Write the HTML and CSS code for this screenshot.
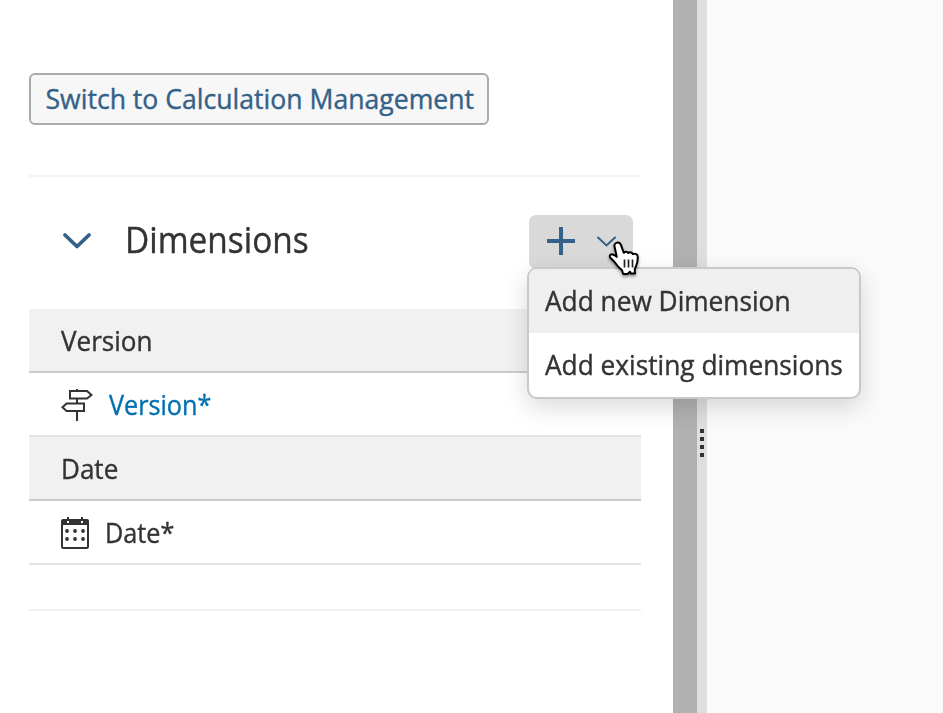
FILE: index.html
```html
<!DOCTYPE html>
<html lang="en">
<head>
<meta charset="utf-8">
<title>Dimensions</title>
<link rel="stylesheet" href="styles.css">
</head>
<body>
<main class="panel">
  <button class="switch"><span class="label switch-label">Switch to Calculation Management</span></button>
  <section class="dimensions">
    <header class="head">
      <svg class="collapse" width="32" height="32" viewBox="0 0 32 32"><path d="M4 11l12 11.500L28 11"/></svg>
      <h1><span class="label title-label">Dimensions</span></h1>
      <div class="add">
        <svg width="104" height="54" viewBox="0 0 104 54"><path class="plus" d="M18 26H46M32 12V40"/><path class="arrow" d="M69 22.500l8.500 8L86 22.500"/></svg>
        <div class="menu">
          <div class="item selected"><span class="label new-label">Add new Dimension</span></div>
          <div class="item"><span class="label existing-label">Add existing dimensions</span></div>
        </div>
        <svg class="cursor" width="36" height="38" viewBox="0 0 36 38">
          <path class="hand" d="M8 3c2-1.200 4.200-.2 4.900 1.800l2.900 8c1.500-1.600 3.600-1.500 4.500.2 1.800-1.200 3.800-.6 4.500 1.100 2.400-1 5 .3 5 3 0 3.600-.2 6-1.800 9.200l-1.300 2.700.3 4.500h-4.200l-.8-1.800-2.300 2.300h-4.500l-1.200-3.800c-2.600-2.200-4.900-4.400-6.700-7.200-1-1.500-2.600-3-4.500-4.700-2.200-2-.7-4.500 2-3.800 1.500.3 2.800 1.200 4 2.400L6.700 7.300C6 5.300 6.400 3.900 8 3z"/>
          <path class="fingers" d="M16.500 19.500v8M20.500 19.500v8M24.500 19.500v8"/>
        </svg>
      </div>
    </header>
    <div class="group"><span class="label short-label">Version</span></div>
    <div class="entry">
      <svg class="sign" width="32" height="32" viewBox="0 0 32 32"><path d="M9 2H26l4.500 4L26 9.500H9zM5.500 14.500H23V22H5.500l-4-3.700zM16 0v2M16 9.500v5M16 22v10"/></svg>
      <a><span class="label starred-label">Version*</span></a>
    </div>
    <div class="group"><span class="label short-label">Date</span></div>
    <div class="entry date">
      <svg class="calendar" width="28" height="32" viewBox="0 0 28 32"><path class="frame" d="M1 4v25.500q0 1.500 1.500 1.500h23q1.500 0 1.500-1.500V4"/><path class="dark" fill-rule="evenodd" d="M2 2h4V0h2v2h12V0h2v2h4q2 0 2 2v4H0V4q0-2 2-2zM6 4v2h2V4zM20 4v2h2V4z"/><g class="dark"><circle cx="6" cy="14" r="1.900"/><circle cx="14" cy="14" r="1.900"/><circle cx="22" cy="14" r="1.900"/><circle cx="6" cy="22" r="1.900"/><circle cx="14" cy="22" r="1.900"/><circle cx="22" cy="22" r="1.900"/></g></svg>
      <span class="label starred-label">Date*</span>
    </div>
  </section>
</main>
<div class="gutter"></div>
<div class="splitter"><div class="grip"><i></i><i></i><i></i><i></i></div></div>
<aside class="canvas"></aside>
</body>
</html>
```

FILE: styles.css
```css
* { box-sizing: border-box; }
body { margin: 0; height: 713px; display: flex; overflow: hidden; background: #fff; color: #333; font: 28px/40px "Open Sans", sans-serif; }
svg { display: block; flex: none; fill: none; }
.label { display: inline-block; white-space: nowrap; transform-origin: left center; -webkit-text-stroke: .4px currentColor; }
.switch-label { transform: translateX(.5px) scaleX(.95); }
.title-label { transform: scaleX(.928); }
.new-label, .existing-label { transform: scaleX(.938); }
.short-label { transform: scaleX(.93); }
.starred-label { transform: scaleX(.9); }
.panel { width: 673px; padding: 73px 32px 0 29px; flex: none; }
.gutter { width: 24px; background: #b1b1b1; }
.splitter { width: 10px; background: #dedede; padding: 429px 0 0 3px; }
.grip { display: grid; gap: 4px; }
.grip i { width: 4px; height: 4px; background: #333; }
.canvas { flex: 1; background: #fafafa; }
.switch { display: flex; align-items: center; width: 460px; height: 52px; padding: 0 0 2px 14px; border: 2px solid #ababab; border-radius: 6px; background: #f7f7f7; color: #346187; font: inherit; }
.dimensions { margin-top: 50px; height: 436px; border-top: 2px solid #f2f2f2; border-bottom: 2px solid #f2f2f2; }
.head { height: 132px; display: flex; padding: 38px 8px 0 32px; }
.collapse { margin-top: 9px; stroke: #346187; stroke-width: 3.800; stroke-linecap: round; stroke-linejoin: round; }
h1 { margin: 0 0 0 32px; font-size: 36px; line-height: 50px; font-weight: 400; }
.add { position: relative; width: 104px; height: 54px; margin-left: auto; border-radius: 7px; background: #d9d9d9; }
.plus { stroke: #346187; stroke-width: 4; }
.arrow { stroke: #346187; stroke-width: 2; stroke-linecap: round; }
.menu { position: absolute; left: -2px; top: 52px; width: 334px; height: 132px; border: 2px solid #c9c9c9; border-radius: 10px; background: #fff; overflow: hidden; box-shadow: 0 8px 24px rgba(0,0,0,.15); }
.item { height: 64px; padding: 11px 0 0 16px; }
.existing-label { max-width: 314px; }
.selected { background: #efefef; }
.cursor { position: absolute; left: 79px; top: 25px; filter: drop-shadow(0 2px 1.500px rgba(0,0,0,.4)); }
.hand { fill: #fff; stroke: #000; stroke-width: 2; stroke-linejoin: round; }
.fingers { stroke: #222; stroke-width: 1.700; }
.group { height: 64px; padding: 11px 32px; background: #f1f1f1; border-bottom: 2px solid #ccc; }
.entry { height: 64px; display: flex; align-items: center; gap: 16px; padding-left: 32px; border-bottom: 2px solid #e4e4e4; }
.entry svg { margin-top: 2px; }
.entry a { color: #0070b1; }
.sign { stroke: #333; stroke-width: 2; }
.frame { stroke: #333; stroke-width: 2; }
.dark { fill: #333; }
```
